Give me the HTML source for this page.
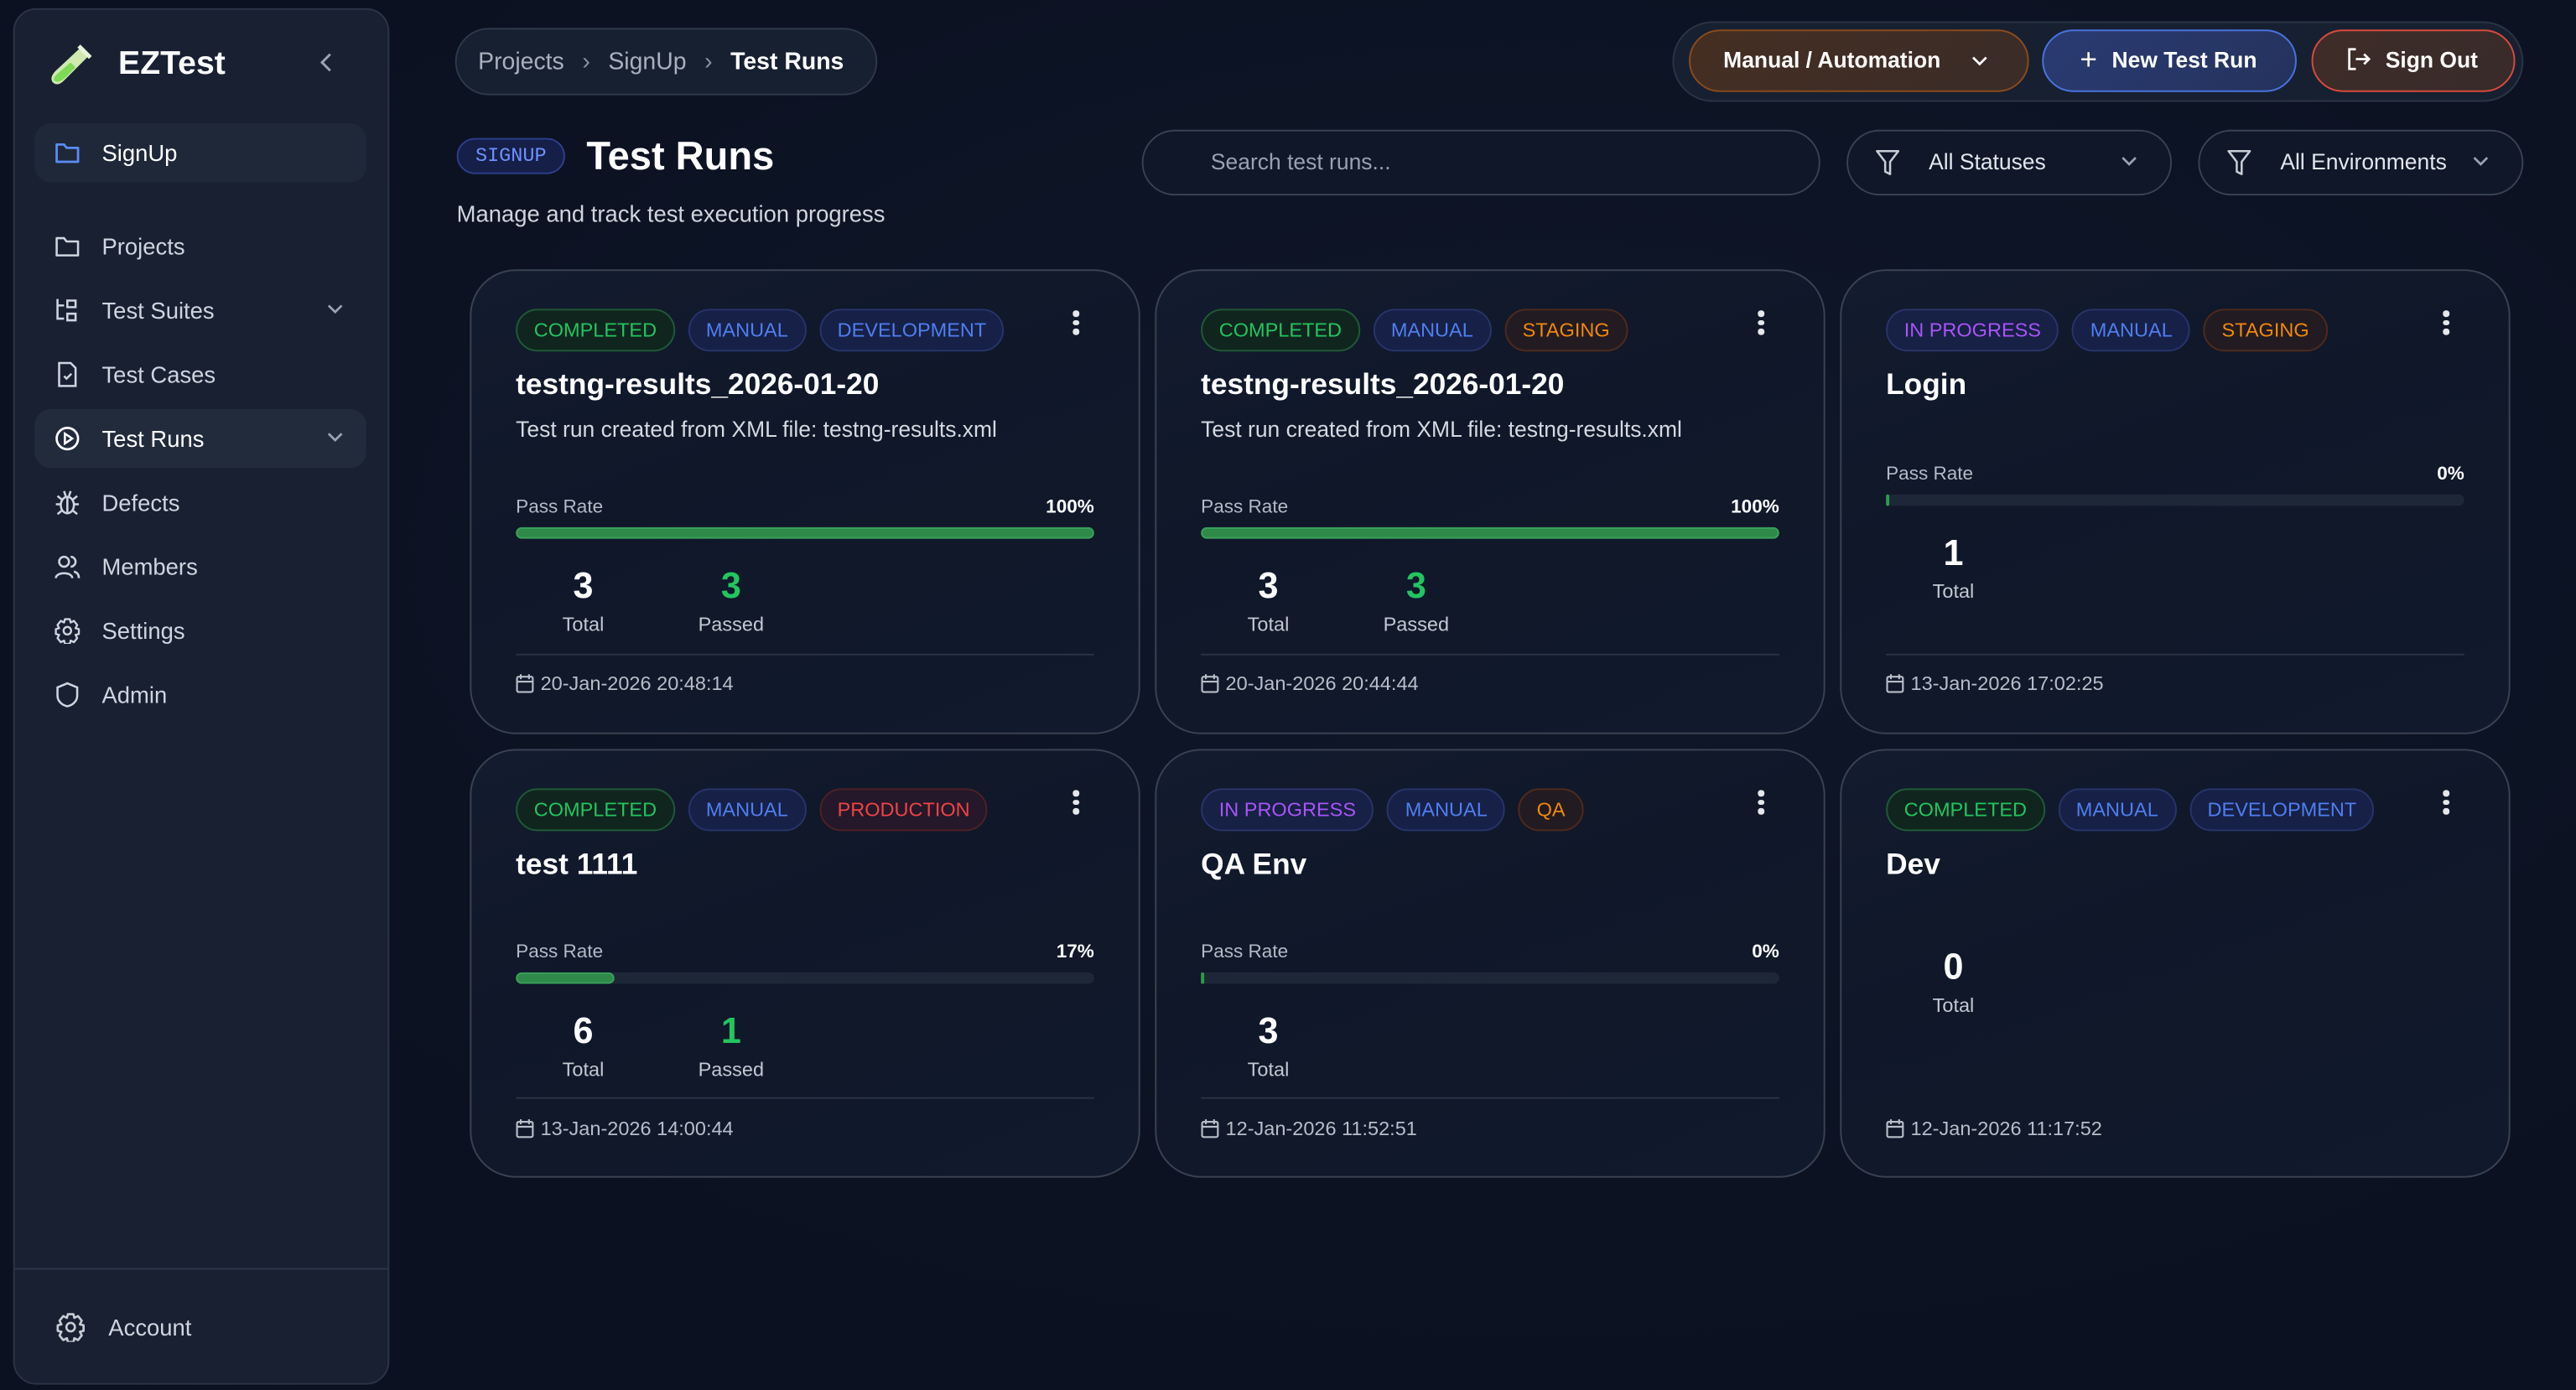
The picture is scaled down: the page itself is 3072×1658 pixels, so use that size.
<!DOCTYPE html>
<html><head><meta charset="utf-8">
<style>
*{box-sizing:border-box;margin:0;padding:0}
html,body{width:3072px;height:1658px;overflow:hidden;background:#0b1120}
#w{position:absolute;left:0;top:0;width:1568px;height:846px;transform:scale(1.959184);transform-origin:0 0;font-family:"Liberation Sans",sans-serif;color:#e5e7eb;background:radial-gradient(ellipse at 60% 40%,#0f172a 0%,#0b1120 70%)}
.a{position:absolute}
.sb{left:8px;top:5px;width:229px;height:838px;background:#182032;border:1px solid #2b3446;border-radius:14px}
.ni{position:absolute;left:21px;width:202px;height:36px;border-radius:10px;font-size:14px;color:#cfd5df;line-height:36px}
.ni svg{position:absolute;left:12px;top:10px}
.ni span{position:absolute;left:41px}
.ni .chev{left:auto;right:14px;top:13px}
.pill{border-radius:999px;white-space:nowrap}
.card{position:absolute;width:408px;background:linear-gradient(160deg,#131c2e,#0f1729 40%,#111a2c);border:1.5px solid #3a4252;border-radius:28px}
.bds{position:absolute;left:27px;top:23px;display:flex;gap:8px}
.bd{height:26px;line-height:24px;border-radius:13px;font-size:12px;padding:0 10px;border:1px solid;white-space:nowrap}
.g{color:#22c55e;background:#11251f;border-color:#1f5a35}
.b{color:#4f7ff0;background:#172046;border-color:#27346b}
.o{color:#f08a0b;background:#231b22;border-color:#4e2a1c}
.r{color:#ef4444;background:#24182a;border-color:#4e2025}
.p{color:#a855f7;background:#172045;border-color:#2a346a}
.tt{position:absolute;left:27px;font-size:18px;font-weight:bold;color:#fff;line-height:24px}
.ds{position:absolute;left:27px;font-size:13.5px;color:#d5d9e0;line-height:20px}
.pr{position:absolute;left:27px;right:27px;font-size:11.5px;color:#b4bac5;line-height:16px}
.pr b{position:absolute;right:0;color:#fff;font-weight:bold}
.bar{position:absolute;left:27px;right:27px;height:7px;border-radius:4px;background:#1e2737}
.bar i{position:absolute;left:0;top:0;bottom:0;border-radius:4px;background:#2f8a4a;border:1px solid #3aa05a}
.st{position:absolute;width:80px;text-align:center}
.st .n{font-size:22px;font-weight:bold;color:#fff;line-height:26px}
.st .l{font-size:12px;color:#c3c8d1;line-height:16px;margin-top:2px}
.dv{position:absolute;left:27px;right:27px;height:1px;background:#2a3344}
.dt{position:absolute;left:27px;font-size:12px;color:#b8bec8;line-height:16px}
.dt svg{vertical-align:-2px;margin-right:4px}
.dots{position:absolute;right:36px;top:24px;width:4px}
.dots i{display:block;width:3.5px;height:3.5px;border-radius:50%;background:#e5e7eb;margin-bottom:2.2px}
</style></head><body><div id="w">

<div class="a sb"></div>
<svg class="a" style="left:29px;top:26px" width="28" height="28" viewBox="0 0 28 28"><path d="M20 3 L25 8 L10 23 Q6 27 3 24 Q1 21 5 17 Z" fill="#cfe9b0"/><path d="M14 12 L17 15 L10 22 Q6 25 4 23 Q3 21 7 18 Z" fill="#7ed957"/><path d="M19 2 L26 9" stroke="#e8f5dc" stroke-width="2.5"/></svg>
<div class="a" style="left:72px;top:27px;font-size:20px;font-weight:bold;color:#fff;line-height:24px">EZTest</div>
<svg class="a" style="left:194px;top:32px" width="10" height="12" viewBox="0 0 10 12"><path d="M7 1 L2 6 L7 11" stroke="#9ca3af" stroke-width="1.5" fill="none"/></svg>

<div class="ni" style="top:75px;background:#1f2839"><svg width="16" height="16" viewBox="0 0 16 16"><path d="M1.5 3 h4.5 l1.5 2 h7 v8.5 h-13 z" stroke="#5b8cf5" stroke-width="1.4" fill="none" stroke-linejoin="round"/></svg><span style="color:#fff">SignUp</span></div>
<div class="ni" style="top:132px"><svg width="16" height="16" viewBox="0 0 16 16"><path d="M1.5 3 h4.5 l1.5 2 h7 v8.5 h-13 z" stroke="#cfd5df" stroke-width="1.3" fill="none" stroke-linejoin="round"/></svg><span>Projects</span></div>
<div class="ni" style="top:171px"><svg width="16" height="16" viewBox="0 0 16 16"><path d="M2 1v12h4M2 5h4M8 2h5v4h-5zM8 10h5v4h-5z" stroke="#cfd5df" stroke-width="1.3" fill="none"/></svg><span>Test Suites</span><svg class="chev" width="10" height="8" viewBox="0 0 10 8"><path d="M1 2 L5 6 L9 2" stroke="#9ca3af" stroke-width="1.4" fill="none"/></svg></div>
<div class="ni" style="top:210px"><svg width="16" height="16" viewBox="0 0 16 16"><path d="M3 1h7l3 3v11h-10z M6 9l1.5 1.5 3-3" stroke="#cfd5df" stroke-width="1.3" fill="none"/></svg><span>Test Cases</span></div>
<div class="ni" style="top:249px;background:#222b3c"><svg width="16" height="16" viewBox="0 0 16 16"><circle cx="8" cy="8" r="6.5" stroke="#fff" stroke-width="1.4" fill="none"/><path d="M6.5 5v6l4.5-3z" stroke="#fff" stroke-width="1.3" fill="none"/></svg><span style="color:#fff">Test Runs</span><svg class="chev" width="10" height="8" viewBox="0 0 10 8"><path d="M1 2 L5 6 L9 2" stroke="#9ca3af" stroke-width="1.4" fill="none"/></svg></div>
<div class="ni" style="top:288px"><svg width="16" height="16" viewBox="0 0 16 16"><ellipse cx="8" cy="9.5" rx="4" ry="5" stroke="#cfd5df" stroke-width="1.3" fill="none"/><path d="M8 5v10M1 9h3M12 9h3M2 4l2.5 2M14 4l-2.5 2M2 15l2.5-2M14 15l-2.5-2M6 1l1 3M10 1l-1 3" stroke="#cfd5df" stroke-width="1.3"/></svg><span>Defects</span></div>
<div class="ni" style="top:327px"><svg width="16" height="16" viewBox="0 0 16 16"><circle cx="6" cy="5" r="3" stroke="#cfd5df" stroke-width="1.3" fill="none"/><path d="M1 15c0-4 10-4 10 0M10 2a3 3 0 0 1 0 6M12 11c2 .5 3 2 3 4" stroke="#cfd5df" stroke-width="1.3" fill="none"/></svg><span>Members</span></div>
<div class="ni" style="top:366px"><svg width="16" height="16" viewBox="0 0 16 16"><path d="M6.5 1h3l.5 2 2-1 2 2.5-1 2 2 .5v3l-2 .5 1 2-2 2.5-2-1-.5 2h-3l-.5-2-2 1-2-2.5 1-2-2-.5v-3l2-.5-1-2 2-2.5 2 1z" stroke="#cfd5df" stroke-width="1.2" fill="none" stroke-linejoin="round"/><circle cx="8" cy="8" r="2.3" stroke="#cfd5df" stroke-width="1.2" fill="none"/></svg><span>Settings</span></div>
<div class="ni" style="top:405px"><svg width="16" height="16" viewBox="0 0 16 16"><path d="M8 1l6 2.5v5c0 3.5-3 6-6 6.5-3-.5-6-3-6-6.5v-5z" stroke="#cfd5df" stroke-width="1.3" fill="none"/></svg><span>Admin</span></div>
<div class="a" style="left:9px;top:772px;width:227px;height:1px;background:#2d3647"></div>
<svg class="a" style="left:34px;top:799px" width="18" height="18" viewBox="0 0 16 16"><path d="M6.5 1h3l.5 2 2-1 2 2.5-1 2 2 .5v3l-2 .5 1 2-2 2.5-2-1-.5 2h-3l-.5-2-2 1-2-2.5 1-2-2-.5v-3l2-.5-1-2 2-2.5 2 1z" stroke="#c7ccd5" stroke-width="1.2" fill="none" stroke-linejoin="round"/><circle cx="8" cy="8" r="2.3" stroke="#c7ccd5" stroke-width="1.2" fill="none"/></svg>
<div class="a" style="left:66px;top:799px;font-size:14px;color:#cfd5df;line-height:18px">Account</div>

<div class="a pill" style="left:277px;top:17px;width:257px;height:41px;background:#172031;border:1.5px solid #2f3849"></div>
<div class="a" style="left:291px;top:28px;font-size:14.5px;line-height:20px;color:#aab1bd;white-space:nowrap">Projects<span style="margin:0 11px;color:#8a92a0">›</span>SignUp<span style="margin:0 11px;color:#8a92a0">›</span><span style="color:#fff;font-weight:bold">Test Runs</span></div>

<div class="a pill" style="left:1018px;top:13px;width:518px;height:49px;background:#172031;border:1.5px solid #2b3444"></div>
<div class="a pill" style="left:1028px;top:18px;width:207px;height:38px;background:linear-gradient(135deg,#452e22,#3a2c28);border:1.5px solid #8a4a1c;color:#fff;font-weight:bold;font-size:13.5px;line-height:35px;padding-left:20px">Manual / Automation<svg style="position:absolute;left:171px;top:15px" width="10" height="7" viewBox="0 0 10 7"><path d="M1 1l4 4 4-4" stroke="#fff" stroke-width="1.4" fill="none"/></svg></div>
<div class="a pill" style="left:1243px;top:18px;width:155px;height:38px;background:linear-gradient(135deg,#2a3b73,#24325c);border:1.5px solid #4a72e0;color:#fff;font-weight:bold;font-size:13.5px;line-height:35px;padding-left:22px"><span style="font-weight:normal;font-size:18px;vertical-align:-1px;margin-right:9px">+</span>New Test Run</div>
<div class="a pill" style="left:1407px;top:18px;width:124px;height:38px;background:linear-gradient(135deg,#3f2c28,#372b2a);border:1.5px solid #d84a3c;color:#fff;font-weight:bold;font-size:13.5px;line-height:35px;padding-left:20px"><svg style="vertical-align:-3px;margin-right:8px" width="16" height="16" viewBox="0 0 16 16"><path d="M6 2H2v12h4M6 8h8M11 5l3 3-3 3" stroke="#fff" stroke-width="1.4" fill="none"/></svg>Sign Out</div>

<div class="a pill" style="left:278px;top:84px;width:66px;height:22px;background:#151f48;border:1px solid #2d3f8e;color:#7090ff;font-family:'Liberation Mono',monospace;font-size:12px;line-height:20px;text-align:center">SIGNUP</div>
<div class="a" style="left:357px;top:82px;font-size:24px;font-weight:bold;color:#fff;line-height:28px">Test Runs</div>
<div class="a" style="left:278px;top:120px;font-size:14px;color:#d0d5dd;line-height:20px">Manage and track test execution progress</div>

<div class="a pill" style="left:695px;top:79px;width:413px;height:40px;background:#0f1729;border:1.5px solid #394253"></div>
<div class="a" style="left:737px;top:90px;font-size:13.5px;color:#9aa2b0;line-height:18px">Search test runs...</div>
<div class="a pill" style="left:1124px;top:79px;width:198px;height:40px;background:#0f1729;border:1.5px solid #394253"></div>
<svg class="a" style="left:1141px;top:90px" width="16" height="18" viewBox="0 0 16 18"><path d="M1.5 2h13l-5 6.5v7.5l-3-1.5v-6z" stroke="#c7ccd5" stroke-width="1.3" fill="none" stroke-linejoin="round"/></svg>
<div class="a" style="left:1174px;top:90px;font-size:13.5px;color:#e2e6ec;line-height:18px">All Statuses</div>
<svg class="a" style="left:1291px;top:95px" width="10" height="7" viewBox="0 0 10 7"><path d="M1 1l4 4 4-4" stroke="#9ca3af" stroke-width="1.4" fill="none"/></svg>
<div class="a pill" style="left:1338px;top:79px;width:198px;height:40px;background:#0f1729;border:1.5px solid #394253"></div>
<svg class="a" style="left:1355px;top:90px" width="16" height="18" viewBox="0 0 16 18"><path d="M1.5 2h13l-5 6.5v7.5l-3-1.5v-6z" stroke="#c7ccd5" stroke-width="1.3" fill="none" stroke-linejoin="round"/></svg>
<div class="a" style="left:1388px;top:90px;font-size:13.5px;color:#e2e6ec;line-height:18px">All Environments</div>
<svg class="a" style="left:1505px;top:95px" width="10" height="7" viewBox="0 0 10 7"><path d="M1 1l4 4 4-4" stroke="#9ca3af" stroke-width="1.4" fill="none"/></svg>

<div class="card" style="left:286px;top:164px;height:283px">
 <div class="bds"><div class="bd g">COMPLETED</div><div class="bd b">MANUAL</div><div class="bd b">DEVELOPMENT</div></div>
 <div class="dots"><i></i><i></i><i></i></div>
 <div class="tt" style="top:57px">testng-results_2026-01-20</div>
 <div class="ds" style="top:87px">Test run created from XML file: testng-results.xml</div>
 <div class="pr" style="top:136px">Pass Rate<b>100%</b></div>
 <div class="bar" style="top:156px"><i style="right:0"></i></div>
 <div class="st" style="left:28px;top:179px"><div class="n">3</div><div class="l">Total</div></div>
 <div class="st" style="left:118px;top:179px"><div class="n" style="color:#22c55e">3</div><div class="l">Passed</div></div>
 <div class="dv" style="top:233px"></div>
 <div class="dt" style="top:243px"><svg width="11" height="12" viewBox="0 0 11 12"><rect x=".7" y="2" width="9.6" height="9.3" rx="1" stroke="#b8bec8" stroke-width="1.1" fill="none"/><path d="M.7 5h9.6M3 .5v3M8 .5v3" stroke="#b8bec8" stroke-width="1.1"/></svg>20-Jan-2026 20:48:14</div>
</div>
<div class="card" style="left:703px;top:164px;height:283px">
 <div class="bds"><div class="bd g">COMPLETED</div><div class="bd b">MANUAL</div><div class="bd o">STAGING</div></div>
 <div class="dots"><i></i><i></i><i></i></div>
 <div class="tt" style="top:57px">testng-results_2026-01-20</div>
 <div class="ds" style="top:87px">Test run created from XML file: testng-results.xml</div>
 <div class="pr" style="top:136px">Pass Rate<b>100%</b></div>
 <div class="bar" style="top:156px"><i style="right:0"></i></div>
 <div class="st" style="left:28px;top:179px"><div class="n">3</div><div class="l">Total</div></div>
 <div class="st" style="left:118px;top:179px"><div class="n" style="color:#22c55e">3</div><div class="l">Passed</div></div>
 <div class="dv" style="top:233px"></div>
 <div class="dt" style="top:243px"><svg width="11" height="12" viewBox="0 0 11 12"><rect x=".7" y="2" width="9.6" height="9.3" rx="1" stroke="#b8bec8" stroke-width="1.1" fill="none"/><path d="M.7 5h9.6M3 .5v3M8 .5v3" stroke="#b8bec8" stroke-width="1.1"/></svg>20-Jan-2026 20:44:44</div>
</div>
<div class="card" style="left:1120px;top:164px;height:283px">
 <div class="bds"><div class="bd p">IN PROGRESS</div><div class="bd b">MANUAL</div><div class="bd o">STAGING</div></div>
 <div class="dots"><i></i><i></i><i></i></div>
 <div class="tt" style="top:57px">Login</div>
 <div class="pr" style="top:116px">Pass Rate<b>0%</b></div>
 <div class="bar" style="top:136px"><i style="width:2px;border:none;background:#2f9a4a"></i></div>
 <div class="st" style="left:28px;top:159px"><div class="n">1</div><div class="l">Total</div></div>
 <div class="dv" style="top:233px"></div>
 <div class="dt" style="top:243px"><svg width="11" height="12" viewBox="0 0 11 12"><rect x=".7" y="2" width="9.6" height="9.3" rx="1" stroke="#b8bec8" stroke-width="1.1" fill="none"/><path d="M.7 5h9.6M3 .5v3M8 .5v3" stroke="#b8bec8" stroke-width="1.1"/></svg>13-Jan-2026 17:02:25</div>
</div>

<div class="card" style="left:286px;top:456px;height:261px">
 <div class="bds"><div class="bd g">COMPLETED</div><div class="bd b">MANUAL</div><div class="bd r">PRODUCTION</div></div>
 <div class="dots"><i></i><i></i><i></i></div>
 <div class="tt" style="top:57px">test 1111</div>
 <div class="pr" style="top:115px">Pass Rate<b>17%</b></div>
 <div class="bar" style="top:135px"><i style="width:60px"></i></div>
 <div class="st" style="left:28px;top:158px"><div class="n">6</div><div class="l">Total</div></div>
 <div class="st" style="left:118px;top:158px"><div class="n" style="color:#22c55e">1</div><div class="l">Passed</div></div>
 <div class="dv" style="top:211px"></div>
 <div class="dt" style="top:222px"><svg width="11" height="12" viewBox="0 0 11 12"><rect x=".7" y="2" width="9.6" height="9.3" rx="1" stroke="#b8bec8" stroke-width="1.1" fill="none"/><path d="M.7 5h9.6M3 .5v3M8 .5v3" stroke="#b8bec8" stroke-width="1.1"/></svg>13-Jan-2026 14:00:44</div>
</div>
<div class="card" style="left:703px;top:456px;height:261px">
 <div class="bds"><div class="bd p">IN PROGRESS</div><div class="bd b">MANUAL</div><div class="bd o">QA</div></div>
 <div class="dots"><i></i><i></i><i></i></div>
 <div class="tt" style="top:57px">QA Env</div>
 <div class="pr" style="top:115px">Pass Rate<b>0%</b></div>
 <div class="bar" style="top:135px"><i style="width:2px;border:none;background:#2f9a4a"></i></div>
 <div class="st" style="left:28px;top:158px"><div class="n">3</div><div class="l">Total</div></div>
 <div class="dv" style="top:211px"></div>
 <div class="dt" style="top:222px"><svg width="11" height="12" viewBox="0 0 11 12"><rect x=".7" y="2" width="9.6" height="9.3" rx="1" stroke="#b8bec8" stroke-width="1.1" fill="none"/><path d="M.7 5h9.6M3 .5v3M8 .5v3" stroke="#b8bec8" stroke-width="1.1"/></svg>12-Jan-2026 11:52:51</div>
</div>
<div class="card" style="left:1120px;top:456px;height:261px">
 <div class="bds"><div class="bd g">COMPLETED</div><div class="bd b">MANUAL</div><div class="bd b">DEVELOPMENT</div></div>
 <div class="dots"><i></i><i></i><i></i></div>
 <div class="tt" style="top:57px">Dev</div>
 <div class="st" style="left:28px;top:119px"><div class="n">0</div><div class="l">Total</div></div>
 <div class="dt" style="top:222px"><svg width="11" height="12" viewBox="0 0 11 12"><rect x=".7" y="2" width="9.6" height="9.3" rx="1" stroke="#b8bec8" stroke-width="1.1" fill="none"/><path d="M.7 5h9.6M3 .5v3M8 .5v3" stroke="#b8bec8" stroke-width="1.1"/></svg>12-Jan-2026 11:17:52</div>
</div>

</div></body></html>
